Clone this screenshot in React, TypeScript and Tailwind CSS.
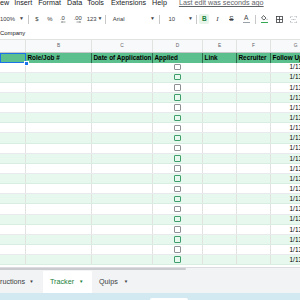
import React from "react";

const cols = [
  { w: "w-[26px]" },
  { w: "w-[66px]" },
  { w: "w-[61px]" },
  { w: "w-[50px]" },
  { w: "w-[34px]" },
  { w: "w-[34px]" },
  { w: "w-[50px]" },
];

const letters = ["", "B", "C", "D", "E", "F", "G"];
const headers = ["", "Role/Job #", "Date of Application", "Applied", "Link", "Recruiter", "Follow Up"];

function Sep() {
  return <div className="w-px h-[9px] bg-[#c7c7c7]" />;
}

function Caret() {
  return <span className="text-[5px] text-[#444]">▼</span>;
}

function Arrow({ left }: { left?: boolean }) {
  return (
    <svg width="5" height="2" viewBox="0 0 10 4" className="ml-[2px]">
      <path d={left ? "M1 2 H9 M1 2 L3 0.5 M1 2 L3 3.5" : "M1 2 H9 M9 2 L7 0.5 M9 2 L7 3.5"} stroke="#3c4043" strokeWidth="1" fill="none" />
    </svg>
  );
}

function Toolbar() {
  return (
    <div className="flex items-center h-[18px] text-[5.9px] text-[#3c4043]">
      <div className="w-[15px]">100%</div>
      <div className="w-[13px] flex justify-center"><Caret /></div>
      <div className="w-[2px] flex justify-center"><Sep /></div>
      <div className="w-[14px] text-center">$</div>
      <div className="w-[12px] text-center">%</div>
      <div className="w-[13px] flex flex-col items-center leading-[6px]">
        <span>.0</span>
        <Arrow left />
      </div>
      <div className="w-[18px] flex flex-col items-center leading-[6px]">
        <span>.00</span>
        <Arrow />
      </div>
      <div className="w-[14px] flex items-center gap-[1px]">
        123<Caret />
      </div>
      <div className="w-[10px] flex justify-center"><Sep /></div>
      <div className="w-[39px] pl-[2px]">Arial</div>
      <div className="w-[6px] flex justify-center"><Caret /></div>
      <div className="w-[8px] flex justify-center"><Sep /></div>
      <div className="w-[22px] pl-[5px]">10</div>
      <div className="w-[10px] flex justify-center"><Caret /></div>
      <div className="w-[2px] flex justify-center"><Sep /></div>
      <div className="ml-[2px] w-[10px] h-[10px] rounded-[2px] bg-[#e6f4ea] flex items-center justify-center font-bold text-[#188038] text-[6.5px]">
        B
      </div>
      <div className="w-[16px] text-center italic font-[Liberation_Serif] text-[7px]">I</div>
      <div className="w-[12px] text-center line-through text-[6.5px]">S</div>
      <div className="w-[18px] flex flex-col items-center leading-[6px]">
        <span className="text-[6.5px]">A</span>
        <span className="w-[7px] h-[1.5px] bg-[#9aa0a6] mt-[0.5px]" />
      </div>
      <div className="w-[1px] flex justify-center"><Sep /></div>
      <div className="w-[16px] flex flex-col items-center">
        <svg width="7" height="6" viewBox="0 0 14 12">
          <path d="M5 1 L10 6 L6 10 L1 6 Z" fill="none" stroke="#3c4043" strokeWidth="1.6" />
          <path d="M12 7 q1.5 2 0 3 q-1.5 -1 0 -3z" fill="#3c4043" />
        </svg>
        <span className="w-[7px] h-[1.5px] bg-[#34a853] mt-[0.5px]" />
      </div>
      <div className="w-[14px] flex justify-center">
        <svg width="7" height="7" viewBox="0 0 14 14">
          <rect x="1" y="1" width="12" height="12" fill="none" stroke="#3c4043" strokeWidth="1.6" />
          <path d="M7 1 V13 M1 7 H13" stroke="#3c4043" strokeWidth="1.6" />
        </svg>
      </div>
      <div className="w-[14px] flex justify-center">
        <svg width="7" height="7" viewBox="0 0 14 14">
          <path d="M1 4 V1 H5 M9 1 H13 V4 M1 10 V13 H5 M9 13 H13 V10 M3 7 H11" fill="none" stroke="#9aa0a6" strokeWidth="1.4" strokeDasharray="2 1" />
        </svg>
      </div>
    </div>
  );
}

export default function App() {
  const rows = Array.from({ length: 20 }, (_, i) => i);
  return (
    <div className="w-[300px] h-[300px] overflow-hidden bg-white font-['Liberation_Sans',Arial,sans-serif] flex flex-col">
      {/* menu */}
      <div className="h-[10px] flex items-start text-[7.2px] leading-[8px] -mt-[1px] text-[#202124] whitespace-nowrap">
        <span>ew</span>
        <span className="ml-[5px]">Insert</span>
        <span className="ml-[6px]">Format</span>
        <span className="ml-[6px]">Data</span>
        <span className="ml-[5px]">Tools</span>
        <span className="ml-[7px]">Extensions</span>
        <span className="ml-[6px]">Help</span>
        <span className="ml-[12px] text-[#5f6368] underline">Last edit was seconds ago</span>
      </div>
      <div className="mt-[1px]">
        <Toolbar />
      </div>
      {/* formula bar */}
      <div className="h-[12px] flex items-center text-[5.9px] text-[#202124] border-b border-[#e1e3e1]">
        Company
      </div>
      {/* grid */}
      <div className="w-[321px] flex flex-col">
        <div className="flex h-[12.5px] bg-[#f8f9fa] border-b border-[#c4c7c5]">
          {cols.map((c, i) => (
            <div
              key={i}
              className={`${c.w} shrink-0 border-r border-[#e1e3e1] flex items-center justify-center text-[4.8px] text-[#5f6368]`}
            >
              {letters[i]}
            </div>
          ))}
        </div>
        <div className="flex h-[10px] bg-[#5cc08e] relative">
          {cols.map((c, i) => (
            <div
              key={i}
              className={`${c.w} shrink-0 border-r border-[#2e6b4c] flex items-center pl-[1.5px] text-[6.4px] font-bold text-black overflow-hidden whitespace-nowrap`}
            >
              {headers[i]}
            </div>
          ))}
          <div className="absolute left-0 top-0 w-[26px] h-[10px] border-[1.5px] border-[#1a73e8]" />
          <div className="absolute left-[24px] top-[8px] w-[3px] h-[3px] bg-[#1a73e8] border border-white box-content" />
        </div>
        {rows.map((r) => {
          const green = r % 2 === 1;
          return (
            <div
              key={r}
              className={`flex h-[10.15px] border-b ${green ? "bg-[#e7f9ef] border-[#d8eee2]" : "bg-white border-[#e8eaed]"}`}
            >
              {cols.map((c, i) => (
                <div
                  key={i}
                  className={`${c.w} shrink-0 border-r border-[#e1e3e1] flex items-center ${i === 3 ? "justify-center" : "justify-end pr-[2px]"} text-[6.4px] text-black whitespace-nowrap`}
                >
                  {i === 3 && (
                    <div
                      className={`w-[6.5px] h-[6.5px] rounded-[1px] border ${green ? "border-[#3f9c6b]" : "border-[#8d9094]"}`}
                    />
                  )}
                  {i === 6 && "1/13/2023"}
                </div>
              ))}
            </div>
          );
        })}
      </div>
      {/* scrollbar area */}
      <div className="h-[1.5px] bg-white" />
      <div className="h-[3px] bg-[#f1f3f4] border-t border-[#dadce0] flex">
        <div className="w-[186px] h-[2px] bg-[#c9cbce] rounded-r-full" />
      </div>
      {/* tabs */}
      <div className="flex-1 bg-[#f1f3f4] flex items-stretch pt-[1px] text-[7.2px] text-[#3c4043] whitespace-nowrap">
        <div className="w-[43px] flex items-center overflow-hidden">
          <span className="-ml-[11.6px]">Instructions</span>
          <span className="ml-[4px] text-[4.5px]">▼</span>
        </div>
        <div className="w-[49px] bg-white flex items-center pl-[7px] text-[#188038] font-medium">
          <span>Tracker</span>
          <span className="ml-[5px] text-[4.5px]">▼</span>
        </div>
        <div className="flex items-center pl-[7px]">
          <span>Quips</span>
          <span className="ml-[6px] text-[4.5px]">▼</span>
        </div>
      </div>
      <div className="h-[7px] bg-[#d3e9f1] shrink-0 flex items-end">
        <div className="ml-[150px] w-[38px] h-[2px] bg-white rounded-t-[2px]" />
      </div>
    </div>
  );
}
